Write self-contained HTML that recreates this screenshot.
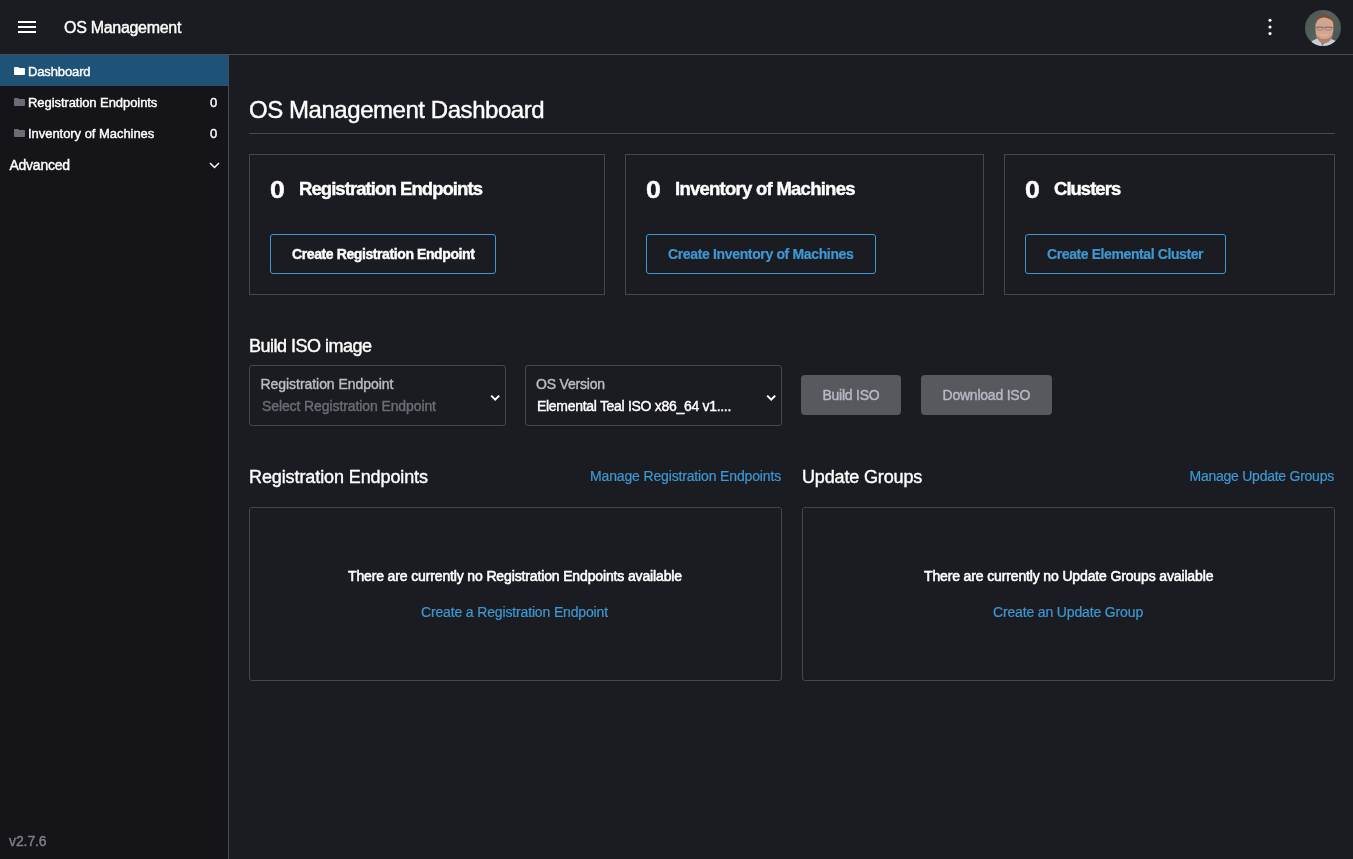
<!DOCTYPE html>
<html><head><meta charset="utf-8">
<style>
*{box-sizing:border-box;margin:0;padding:0}
body{will-change:transform}
html,body{width:1353px;height:859px;overflow:hidden;background:#1b1c21;font-family:"Liberation Sans",sans-serif;color:#fff}
.a{position:absolute}
.t{position:absolute;white-space:nowrap;line-height:1;-webkit-text-stroke:0.4px currentColor}
#header{left:0;top:0;width:1353px;height:54px;background:#1b1c21}
#hline{left:0;top:54px;width:1353px;height:1px;background:#4b4c52}
#side{left:0;top:55px;width:228px;height:804px;background:#141419}
#vline{left:228px;top:55px;width:1px;height:804px;background:#4b4c52}
.bar{position:absolute;left:18px;width:18px;height:2px;background:#fff}
.active{left:0;top:55px;width:228px;height:31px;background:#1e5277}
.folder{position:absolute;width:11px;height:7px;border-radius:1px}
.folder:before{content:"";position:absolute;left:0;top:-1.5px;width:5px;height:2px;border-radius:1px 1px 0 0;background:inherit}
.card{position:absolute;top:154px;height:141px;border:1px solid #46474d}
.btn{position:absolute;top:234px;height:40px;border:1px solid #3d98d3;border-radius:3px}
.sel{position:absolute;top:365px;width:257px;height:61px;border:1px solid #46474d;border-radius:3px}
.dbtn{position:absolute;top:375px;height:40px;background:#58595f;border-radius:4px}
.box{position:absolute;top:507px;width:533px;height:174px;border:1px solid #46474d;border-radius:3px}
.link{color:#3d98d3;-webkit-text-stroke:0.2px currentColor}
</style></head><body>
<div id="header" class="a"></div>
<div id="hline" class="a"></div>
<div id="side" class="a"></div>
<div id="vline" class="a"></div>

<!-- header -->
<div class="bar" style="top:21px"></div>
<div class="bar" style="top:26px"></div>
<div class="bar" style="top:31px"></div>
<div class="t" style="left:64px;top:19.5px;font-size:16px;letter-spacing:-0.3px">OS Management</div>
<svg class="a" style="left:1264px;top:14px" width="12" height="26" viewBox="0 0 12 26"><circle cx="6" cy="6.25" r="1.55" fill="#fff"/><circle cx="6" cy="13" r="1.55" fill="#fff"/><circle cx="6" cy="19.6" r="1.55" fill="#fff"/></svg>
<svg class="a" style="left:1305px;top:10px" width="36" height="36" viewBox="0 0 36 36">
  <defs>
    <clipPath id="cc"><circle cx="18" cy="18" r="18"/></clipPath>
    <linearGradient id="bgg" x1="0" y1="0" x2="1" y2="0.6"><stop offset="0" stop-color="#4b5751"/><stop offset="0.6" stop-color="#56635c"/><stop offset="1" stop-color="#4c5852"/></linearGradient>
    <filter id="bl" x="-20%" y="-20%" width="140%" height="140%"><feGaussianBlur stdDeviation="0.6"/></filter>
  </defs>
  <g clip-path="url(#cc)">
    <rect width="36" height="36" fill="url(#bgg)"/>
    <g filter="url(#bl)">
      <path d="M4 36 L7 31 L14 27.5 L23 27.5 L31 31 L34 36 Z" fill="#c3cfdd"/>
      <path d="M14 28 L17.5 36 L22 28 Z" fill="#8f7367"/>
      <path d="M10.5 14 Q10 26 13 30 Q18 35 24 31 Q28.5 26 28.8 15 Q28 8 19.5 6 Q11 7 10.5 14 Z" fill="#d0a690"/>
      <path d="M11 24 Q13 33 19 33.5 Q26 33 28 24 Q25 29 19 29 Q14 29 11 24 Z" fill="#b27e66"/>
      <path d="M10.6 15 Q10.5 6 19 4.8 Q28 5 29.3 15 L29 21 Q28.5 13 27.5 11 Q23 7.2 18 7.4 Q12 8 11 14 Z" fill="#7e4c30"/>
      <path d="M10.5 17.4 H29" stroke="#7a6860" stroke-width="0.7"/>
      <rect x="12" y="16.8" width="6" height="3.2" rx="1" fill="none" stroke="#7a6a62" stroke-width="0.6"/>
      <rect x="20.5" y="16.8" width="6" height="3.2" rx="1" fill="none" stroke="#7a6a62" stroke-width="0.6"/>
      <path d="M15 24.5 Q19 26.5 23.5 24.5" stroke="#e2c8ba" stroke-width="0.7" fill="none"/>
    </g>
  </g>
</svg>
<!-- sidebar -->
<div class="a active"></div>
<div class="folder" style="left:14px;top:68px;background:#fff"></div>
<div class="t" style="left:28px;top:65px;font-size:13px;letter-spacing:-0.13px">Dashboard</div>
<div class="folder" style="left:14px;top:99px;background:#6c6c76"></div>
<div class="t" style="left:28px;top:96px;font-size:13px;letter-spacing:-0.07px">Registration Endpoints</div>
<div class="t" style="left:210px;top:96px;font-size:13px">0</div>
<div class="folder" style="left:14px;top:130px;background:#6c6c76"></div>
<div class="t" style="left:28px;top:127px;font-size:13px;letter-spacing:-0.045px">Inventory of Machines</div>
<div class="t" style="left:210px;top:127px;font-size:13px">0</div>
<div class="t" style="left:9.5px;top:158px;font-size:14px;letter-spacing:-0.25px">Advanced</div>
<svg class="a" style="left:207.5px;top:160.5px" width="13" height="9" viewBox="0 0 13 9"><path d="M2 2 L6.5 6.5 L11 2" stroke="#fff" stroke-width="1.5" fill="none"/></svg>
<div class="t" style="left:9px;top:834px;font-size:14px;color:#7f7f87;letter-spacing:-0.1px">v2.7.6</div>

<!-- main -->
<div class="t" style="left:249px;top:97.7px;font-size:24px;letter-spacing:-0.45px">OS Management Dashboard</div>
<div class="a" style="left:249px;top:133px;width:1086px;height:1px;background:#46474d"></div>

<div class="card" style="left:249px;width:356px"></div>
<div class="card" style="left:625px;width:359px"></div>
<div class="card" style="left:1004px;width:331px"></div>

<div class="t" style="left:270px;top:178.5px;font-size:23px;font-weight:700;transform:scaleX(1.16);transform-origin:0 0">0</div>
<div class="t" style="left:299px;top:179.8px;font-size:18.5px;font-weight:700;letter-spacing:-0.93px">Registration Endpoints</div>
<div class="btn" style="left:270px;width:226px"></div>
<div class="t" style="left:292px;top:247px;font-size:14px;font-weight:700;letter-spacing:-0.4px">Create Registration Endpoint</div>

<div class="t" style="left:646px;top:178.5px;font-size:23px;font-weight:700;transform:scaleX(1.16);transform-origin:0 0">0</div>
<div class="t" style="left:675px;top:179.8px;font-size:18.5px;font-weight:700;letter-spacing:-0.74px">Inventory of Machines</div>
<div class="btn" style="left:646px;width:230px"></div>
<div class="t link" style="left:668px;top:247px;font-size:14px;font-weight:700;letter-spacing:-0.35px">Create Inventory of Machines</div>

<div class="t" style="left:1025px;top:178.5px;font-size:23px;font-weight:700;transform:scaleX(1.16);transform-origin:0 0">0</div>
<div class="t" style="left:1054px;top:179.8px;font-size:18.5px;font-weight:700;letter-spacing:-0.98px">Clusters</div>
<div class="btn" style="left:1025px;width:201px"></div>
<div class="t link" style="left:1047px;top:247px;font-size:14px;font-weight:700;letter-spacing:-0.4px">Create Elemental Cluster</div>

<div class="t" style="left:249px;top:337px;font-size:18px;letter-spacing:-0.5px">Build ISO image</div>
<div class="sel" style="left:249px"></div>
<div class="t" style="left:260.5px;top:377px;font-size:14px;color:#bcbcc4;letter-spacing:-0.05px">Registration Endpoint</div>
<div class="t" style="left:262px;top:399px;font-size:14px;color:#6c6c76;letter-spacing:-0.1px">Select Registration Endpoint</div>
<svg class="a" style="left:489px;top:392px" width="13" height="10" viewBox="0 0 13 10"><path d="M2.2 3.6 L6.2 7.6 L10.2 3.6" stroke="#fff" stroke-width="2" fill="none"/></svg>
<div class="sel" style="left:525px"></div>
<div class="t" style="left:536px;top:377px;font-size:14px;color:#bcbcc4;letter-spacing:-0.2px">OS Version</div>
<div class="t" style="left:537px;top:399px;font-size:14px;letter-spacing:-0.3px">Elemental Teal ISO x86_64 v1....</div>
<svg class="a" style="left:765px;top:392px" width="13" height="10" viewBox="0 0 13 10"><path d="M2.2 3.6 L6.2 7.6 L10.2 3.6" stroke="#fff" stroke-width="2" fill="none"/></svg>

<div class="dbtn" style="left:801px;width:100px"></div>
<div class="t" style="left:822.5px;top:388px;font-size:14px;color:#b9b9c6;letter-spacing:-0.25px">Build ISO</div>
<div class="dbtn" style="left:921px;width:131px"></div>
<div class="t" style="left:942.5px;top:388px;font-size:14px;color:#b9b9c6;letter-spacing:-0.22px">Download ISO</div>

<div class="t" style="left:249px;top:468px;font-size:18px;letter-spacing:-0.1px">Registration Endpoints</div>
<div class="t link" style="left:590px;top:469px;font-size:14px;letter-spacing:-0.15px">Manage Registration Endpoints</div>
<div class="t" style="left:802px;top:468px;font-size:18px;letter-spacing:-0.15px">Update Groups</div>
<div class="t link" style="left:1189.5px;top:469px;font-size:14px;letter-spacing:-0.25px">Manage Update Groups</div>

<div class="box" style="left:249px"></div>
<div class="t" style="left:348px;top:569px;font-size:14px;letter-spacing:-0.14px;-webkit-text-stroke:0.55px #fff">There are currently no Registration Endpoints available</div>
<div class="t link" style="left:421px;top:604.6px;font-size:14px;letter-spacing:-0.15px">Create a Registration Endpoint</div>
<div class="box" style="left:802px"></div>
<div class="t" style="left:924px;top:569px;font-size:14px;letter-spacing:-0.14px;-webkit-text-stroke:0.55px #fff">There are currently no Update Groups available</div>
<div class="t link" style="left:993px;top:604.6px;font-size:14px;letter-spacing:-0.15px">Create an Update Group</div>
</body></html>
